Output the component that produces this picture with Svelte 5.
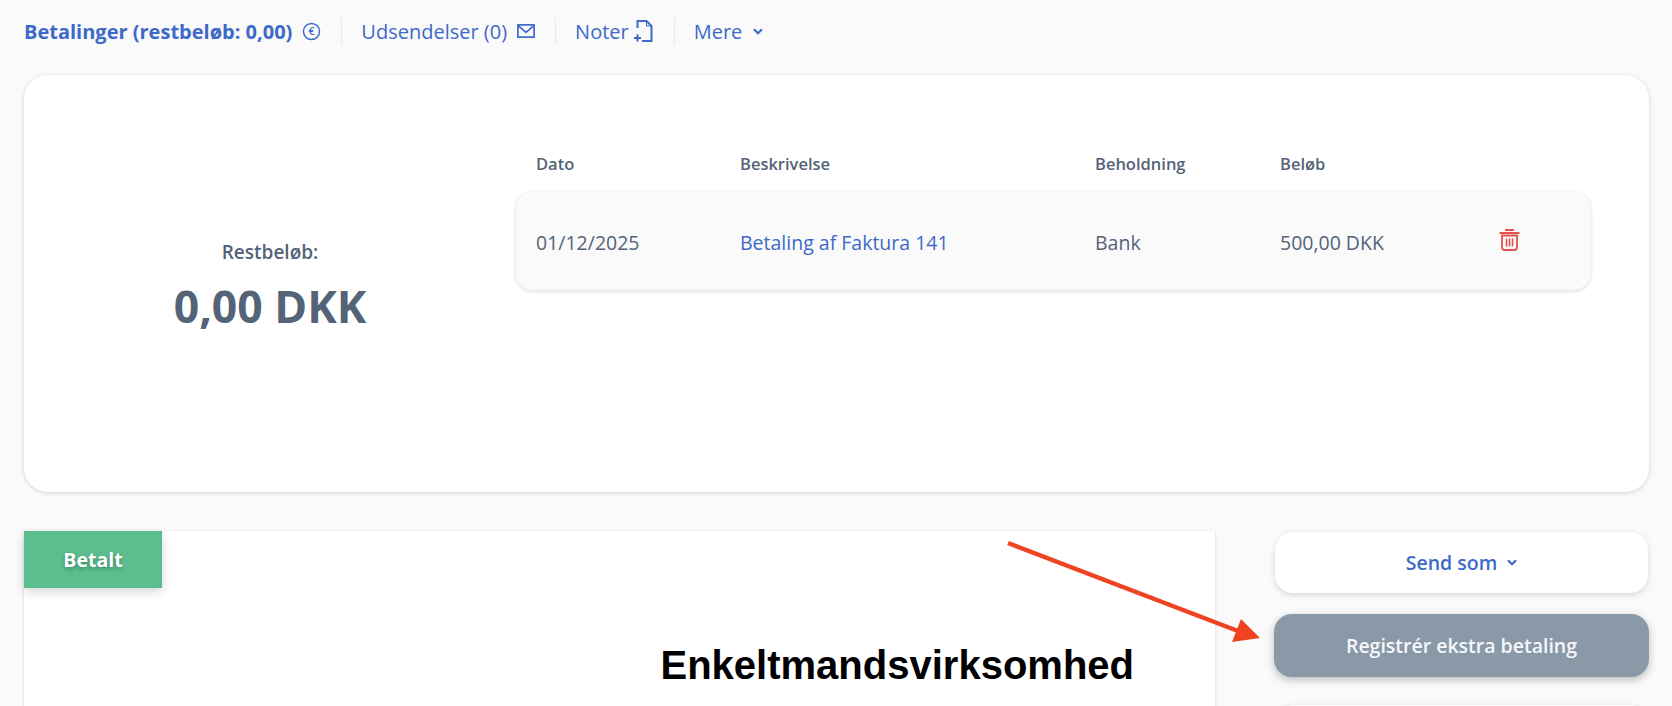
<script>
  const payments = [
    { date: '01/12/2025', text: 'Betaling af Faktura 141', account: 'Bank', amount: '500,00 DKK' }
  ]
</script>

<div class="page">
  <nav class="tabs">
    <a class="tab active" href="#betalinger">
      Betalinger (restbeløb: 0,00)
      <svg width="19" height="19" viewBox="0 0 18 18" fill="none" stroke="currentColor">
        <circle cx="9" cy="9" r="7.6" stroke-width="1.4" />
        <text x="9" y="12.6" text-anchor="middle" font-size="10" font-weight="600" fill="currentColor" stroke="none">€</text>
      </svg>
    </a>
    <a class="tab" href="#udsendelser">
      Udsendelser (0)
      <svg width="18" height="14" viewBox="0 0 18 14" fill="none" stroke="currentColor" stroke-width="1.7">
        <rect x="0.9" y="0.9" width="16.2" height="12.2" />
        <path d="M1.5 1.8l7.5 6.6 7.5-6.6" />
      </svg>
    </a>
    <a class="tab notes" href="#noter">
      Noter
      <svg width="19" height="22" viewBox="0 0 19 22" fill="none" stroke="currentColor" stroke-width="2">
        <path d="M3.5 8V1h9l5 5v15H8" />
        <path d="M12.5 1v5h5" stroke-width="1" />
        <path d="M0 18h7M3.5 14.5v7" />
      </svg>
    </a>
    <a class="tab" href="#mere">
      Mere
      <svg class="chev" width="10" height="7" viewBox="0 0 10 7" fill="none" stroke="currentColor" stroke-width="2.2">
        <path d="M1 1.2l4 4 4-4" />
      </svg>
    </a>
  </nav>

  <section class="card">
    <div class="rest">
      <div class="rest-label">Restbeløb:</div>
      <div class="rest-value">0,00 DKK</div>
    </div>
    <div class="table">
      <div class="cols head">
        <span>Dato</span>
        <span>Beskrivelse</span>
        <span>Beholdning</span>
        <span>Beløb</span>
      </div>
      {#each payments as p}
        <div class="cols row">
          <span>{p.date}</span>
          <a href="#faktura">{p.text}</a>
          <span>{p.account}</span>
          <span>{p.amount}</span>
          <svg class="trash" width="21" height="22" viewBox="0 0 21 22" fill="none" stroke="#e8504c">
            <path d="M0.5 4h20M6 1h9" stroke-width="2" />
            <path d="M3 6.5v11.5a3 3 0 0 0 3 3h9a3 3 0 0 0 3-3V6.5z" stroke-width="1.8" />
            <path d="M7.5 9.5v8M10.5 9.5v8M13.5 9.5v8" stroke-width="1.6" />
          </svg>
        </div>
      {/each}
    </div>
  </section>

  <div class="bottom">
    <div class="doc">
      <div class="badge">Betalt</div>
      <h1>Enkeltmandsvirksomhed</h1>
    </div>
    <aside class="actions">
      <button class="btn">
        Send som
        <svg width="10" height="7" viewBox="0 0 10 7" fill="none" stroke="currentColor" stroke-width="2.2">
          <path d="M1 1.2l4 4 4-4" />
        </svg>
      </button>
      <button class="btn grey">Registrér ekstra betaling</button>
      <button class="btn"></button>
    </aside>
  </div>

  <svg class="arrow" width="262" height="112" viewBox="0 0 262 112">
    <path d="M1 3L231 91" stroke="#ee4424" stroke-width="4.5" fill="none" />
    <path d="M253 98L234 79L225 102z" fill="#ee4424" />
  </svg>
</div>

<style>
  :global(body) {
    background: #fafafa;
    font-family: "Open Sans", sans-serif;
    overflow: hidden;
  }

  .page {
    position: relative;
    height: 706px;
    padding: 0 23px 0 24px;
    box-sizing: border-box;
    overflow: hidden;
    color: #546378;
  }

  .tabs {
    display: flex;
    align-items: center;
    height: 32px;
    padding-top: 15px;
    margin-bottom: 28px;
  }

  .tab {
    display: flex;
    align-items: center;
    gap: 10px;
    height: 27px;
    padding: 0 20px 0 19px;
    color: #3d69c9;
    font-size: 20px;
    text-decoration: none;
    border-left: 1px solid #e8e8e8;
    white-space: nowrap;
  }

  .tab:first-child {
    padding-left: 0;
    border-left: none;
  }

  .active {
    font-weight: 700;
  }

  .notes {
    gap: 5px;
    padding-right: 21px;
  }

  .chev {
    margin-left: 1px;
  }

  .card {
    display: flex;
    height: 417px;
    box-sizing: border-box;
    background: #fff;
    border-radius: 24px;
    box-shadow: 0 1px 4px rgba(0, 0, 0, 0.16);
    margin-bottom: 39px;
    padding-right: 59px;
  }

  .rest {
    width: 492px;
    flex: none;
    text-align: center;
    padding-top: 165px;
  }

  .rest-label {
    font-size: 19px;
    font-weight: 600;
    line-height: 24px;
  }

  .rest-value {
    font-size: 44.5px;
    font-weight: 700;
    line-height: 58px;
    margin-top: 13px;
  }

  .table {
    flex: 1;
  }

  .cols {
    display: grid;
    grid-template-columns: 204px 355px 185px 1fr;
    align-items: center;
    padding-left: 20px;
    position: relative;
  }

  .head {
    height: 117px;
    box-sizing: border-box;
    padding-top: 59px;
    font-size: 16.5px;
    font-weight: 600;
  }

  .row {
    height: 98px;
    box-sizing: border-box;
    padding-top: 2px;
    background: #fafafa;
    border-radius: 16px;
    box-shadow: 0 1px 4px rgba(0, 0, 0, 0.16);
    font-size: 19.5px;
  }

  .row a {
    color: #3d69c9;
    text-decoration: none;
  }

  .trash {
    position: absolute;
    left: 983px;
    top: 37px;
  }

  .bottom {
    display: flex;
    gap: 59px;
  }

  .doc {
    position: relative;
    width: 1191px;
    height: 240px;
    flex: none;
    background: #fff;
    box-shadow: 0 1px 3px rgba(0, 0, 0, 0.14);
  }

  .badge {
    width: 138px;
    height: 57px;
    background: #5cbe8f;
    color: #fff;
    font-size: 19.5px;
    font-weight: 700;
    line-height: 57px;
    text-align: center;
    text-shadow: 0 2px 4px rgba(0, 0, 0, 0.3);
    box-shadow: 0 4px 10px rgba(0, 0, 0, 0.16);
  }

  h1 {
    margin: 55px 81px 0 0;
    color: #000;
    font-family: "Liberation Sans", Arial, sans-serif;
    font-size: 40px;
    font-weight: 700;
    line-height: 45px;
    text-align: right;
  }

  .actions {
    flex: 1;
    display: flex;
    flex-direction: column;
    gap: 21px;
  }

  .btn {
    display: flex;
    align-items: center;
    justify-content: center;
    gap: 10px;
    height: 61px;
    flex: none;
    margin: 1px 1px 0;
    border: none;
    border-radius: 18px;
    background: #fff;
    color: #3d69c9;
    font-family: inherit;
    font-size: 19.5px;
    font-weight: 600;
    box-shadow: 0 2px 6px rgba(0, 0, 0, 0.14);
  }

  .grey {
    height: 63px;
    margin: 0 0 6px;
    background: #8a99a8;
    color: #f5f7fa;
    font-size: 19.5px;
    font-weight: 600;
    box-shadow: 0 3px 8px rgba(0, 0, 0, 0.25);
  }

  .arrow {
    position: absolute;
    left: 1007px;
    top: 540px;
  }
</style>
